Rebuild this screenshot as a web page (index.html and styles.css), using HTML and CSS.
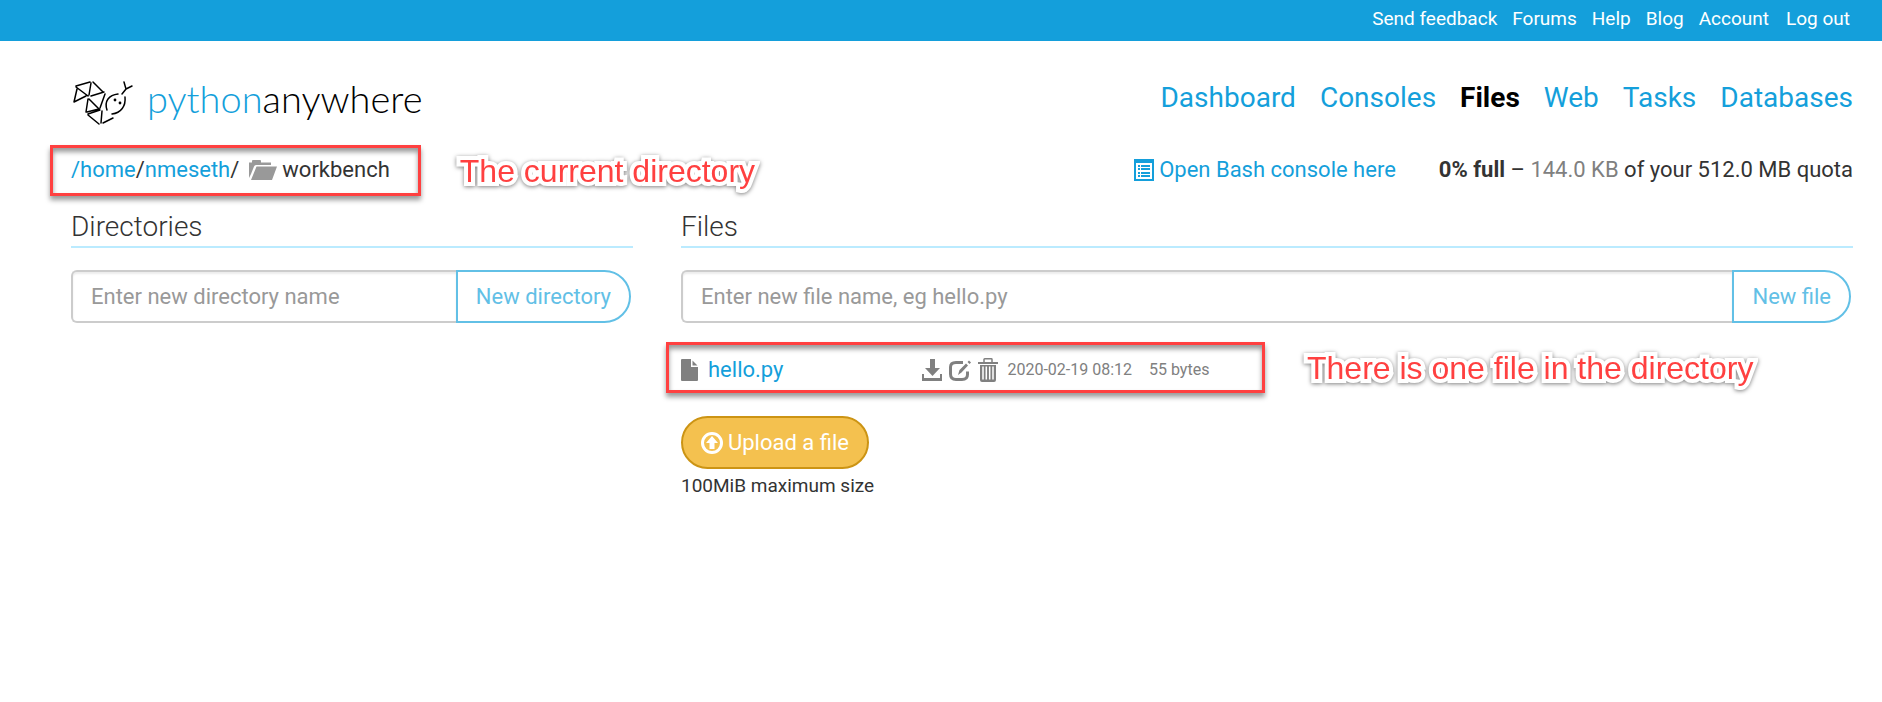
FILE: index.html
```html
<!DOCTYPE html>
<html lang="en">
<head>
<meta charset="utf-8">
<meta name="viewport" content="width=device-width, initial-scale=1">
<title>Files : workbench : PythonAnywhere</title>
<link rel="stylesheet" href="styles.css">
</head>
<body>
<nav class="topbar" aria-label="Account links">
  <a href="#">Send feedback</a>
  <a href="#">Forums</a>
  <a href="#">Help</a>
  <a href="#">Blog</a>
  <a href="#">Account</a>
  <button type="button" class="logout">Log out</button>
</nav>

<header class="masthead">
  <a class="brand" href="#">
    <svg class="snake" viewBox="-2 0 60 44" aria-hidden="true">
      <g fill="none" stroke="#000" stroke-width="1.5" stroke-linecap="round">
        <path d="M3 5 17 1M3 6 15 15M4 8 1 21M18 2 16 14M20 1 30 11M1 21 13 15M18 15 31 11M32 13 27 27M16 18 26 28M15 18 13 31M14 31 26 28M15 33 27 29M15 34 26 43M29 30 28 42M30 42 40 37"/>
        <path d="M45 13C36 14 31 20 34 29M52 16C53 25 48 32 39 33M49 13 53 8 51 1M53 8 59 5"/>
      </g>
      <circle cx="42" cy="19" r="1.4"/><circle cx="47" cy="22" r="1.4"/>
    </svg>
    <span class="wordmark"><span class="py">python</span>anywhere</span>
  </a>
  <nav class="mainnav" aria-label="Main">
    <a href="#">Dashboard</a>
    <a href="#">Consoles</a>
    <a href="#" class="active" aria-current="page">Files</a>
    <a href="#">Web</a>
    <a href="#">Tasks</a>
    <a href="#">Databases</a>
  </nav>
</header>

<main>
  <div class="pathbar">
    <div class="crumbs">
      <span><a href="#">/home</a>/<a href="#">nmeseth</a>/</span>
      <span class="current">
        <svg class="folder" viewBox="0 0 28 20" aria-hidden="true"><path fill="#999" d="M0 18V2.500h3V1q0-1 1-1h7q1 0 1 1v1.500h10V5H7Q5.500 5 5 6.500L2 14ZM7.500 6.500H28L23 20H2Z"/></svg>
        workbench
      </span>
      <span class="frame" aria-hidden="true"></span>
      <span class="note">The current directory</span>
    </div>
    <div class="usage">
      <a class="bash" href="#">
        <svg class="list" viewBox="0 0 20 22" aria-hidden="true"><path fill="#149fdb" fill-rule="evenodd" d="M0 0h20v22H0ZM2 4v16h16V4Z"/><path fill="#149fdb" d="M4 6h2v2H4ZM7 6h9v2H7ZM4 9h2v2H4ZM7 9h9v2H7ZM4 13h2v2H4ZM7 13h9v2H7ZM4 16h2v2H4ZM7 16h9v2H7Z"/></svg>
        Open Bash console here</a>
      <span><b>0% full</b> – <span class="muted">144.0 KB</span> of your 512.0 MB quota</span>
    </div>
  </div>

  <div class="columns">
    <section>
      <h2>Directories</h2>
      <form class="creator">
        <input type="text" aria-label="New directory name" placeholder="Enter new directory name">
        <button type="button">New directory</button>
      </form>
    </section>
    <section>
      <h2>Files</h2>
      <form class="creator">
        <input type="text" aria-label="New file name" placeholder="Enter new file name, eg hello.py">
        <button type="button">New file</button>
      </form>
      <div class="filerow">
        <span class="name">
          <svg class="doc" viewBox="0 0 17 22" aria-hidden="true"><path fill="#808080" d="M1 0h9v8h7v13q0 1-1 1H1q-1 0-1-1V1Q0 0 1 0ZM11.500 1.500 16.500 6.500h-5Z"/></svg>
          <a href="#">hello.py</a>
        </span>
        <span class="actions">
          <button type="button" aria-label="Download"><svg viewBox="0 0 20 24"><path fill="#808080" d="M8 1h5v9h5l-7.500 8L3 10h5ZM0 16h2v4h16v-4h2v7H0Z"/></svg></button>
          <button type="button" class="edit" aria-label="Edit"><svg viewBox="0 0 22 24"><path fill="none" stroke="#808080" stroke-width="3" d="M14 4.500H7Q1.500 4.500 1.500 9v7q0 5.500 5.500 5.500h6q5.500 0 5.500-5v-3"/><path fill="#808080" d="m9 17 1.500-5L17 5.500l2 2-6.500 7ZM18.500 4l1.500-1.500 2 2L20.500 6Z"/></svg></button>
          <button type="button" aria-label="Delete"><svg viewBox="0 0 20 24"><path fill="none" stroke="#808080" stroke-width="1.500" d="M6 4.500V1.500q0-.7.7-.7h6.600q.7 0 .7.700v3"/><path fill="#808080" d="M0 4h20v2H0ZM2 7h16v15q0 2-2 2H4q-2 0-2-2Z"/><path stroke="#fff" stroke-width="1.500" d="M5 8.500v13M8.300 8.500v13M11.700 8.500v13M15 8.500v13"/></svg></button>
        </span>
        <span class="date">2020-02-19 08:12</span>
        <span class="size">55 bytes</span>
        <span class="frame" aria-hidden="true"></span>
        <span class="note">There is one file in the directory</span>
      </div>
      <button type="button" class="upload">
        <svg viewBox="0 0 22 22" aria-hidden="true"><circle cx="11" cy="11" r="9.500" fill="none" stroke="#fff" stroke-width="3"/><path fill="#fff" d="m11 4 6 7h-3.500v6h-5v-6H5Z"/></svg>
        Upload a file
      </button>
      <p class="hint">100MiB maximum size</p>
    </section>
  </div>
</main>
</body>
</html>
```

FILE: styles.css
```css
* { box-sizing: border-box; }

body {
  margin: 0;
  background: #fff;
  color: #333;
  font: 22px/32px Roboto, "Liberation Sans", sans-serif;
}

a { color: #149fdb; text-decoration: none; }
button, input { font: inherit; }
button { cursor: pointer; }
svg { display: block; flex: none; }

.topbar {
  display: flex;
  justify-content: flex-end;
  align-items: center;
  gap: 15px;
  height: 41px;
  padding: 0 32px 4px 0;
  background: #149fdb;
  font-size: 19px;
  line-height: 24px;
}
.topbar a, .logout { color: #fff; }
.logout {
  margin-left: 2px;
  padding: 0;
  border: 0;
  background: none;
}

.masthead, .pathbar {
  display: flex;
  justify-content: space-between;
  padding: 0 29px 0 71px;
}
.masthead { align-items: flex-start; padding-top: 40px; }

.brand {
  display: flex;
  align-items: flex-start;
  gap: 16px;
  color: #000;
}
.snake { width: 60px; height: 44px; overflow: visible; }
.wordmark {
  font: 300 38px/34px Lato, sans-serif;
}
.py { color: #149fdb; }

.mainnav { display: flex; gap: 24px; font-size: 28px; line-height: 34px; }
.mainnav .active { color: #000; font-weight: 700; }

.pathbar { align-items: center; padding-top: 29px; }
.crumbs { position: relative; display: flex; gap: 10px; }
.current, .bash { display: flex; align-items: center; gap: 5px; }
.folder { width: 28px; height: 20px; }
.list { width: 20px; height: 22px; }
.usage { display: flex; gap: 43px; }
.muted { color: #808080; }

.frame {
  position: absolute;
  inset: -9px -31px -10px -21px;
  border: 3px solid #ff4040;
  box-shadow: 0 4px 5px rgb(0 0 0 / 40%), inset 0 4px 5px rgb(0 0 0 / 40%);
  pointer-events: none;
}
.note {
  position: absolute;
  top: -1px;
  left: 100%;
  margin-left: 70px;
  color: #ff4040;
  font: 32px/36px "Liberation Sans", Arial, sans-serif;
  white-space: nowrap;
  paint-order: stroke fill;
  -webkit-text-stroke: 8px #fff;
  stroke-linejoin: round;
  filter: drop-shadow(0 1px 2px rgb(0 0 0 / 50%));
}

.columns {
  display: grid;
  grid-template-columns: 1fr 2fr;
  margin: 22px 5px 0 47px;
}
section { padding: 0 24px; min-width: 0; }

h2 {
  margin: 0 0 22px;
  border-bottom: 2px solid #bbebff;
  font-size: 28px;
  line-height: 38px;
  font-weight: 300;
}

.creator { display: flex; padding-right: 2px; }
.creator input {
  flex: 1;
  min-width: 0;
  height: 53px;
  padding: 0 18px;
  border: 2px solid #ccc;
  border-right: 0;
  border-radius: 6px 0 0 6px;
  box-shadow: inset 0 2px 2px rgb(0 0 0 / 8%);
}
.creator input::placeholder { color: #999; opacity: 1; }
.creator button {
  padding: 0 18px;
  border: 2px solid #62c0e6;
  border-radius: 0 27px 27px 0;
  background: #fff;
  color: #62c0e6;
}

.filerow {
  position: relative;
  display: flex;
  align-items: center;
  width: 552px;
  max-width: 100%;
  margin-top: 31px;
  color: #808080;
  font-size: 16px;
}
.filerow .frame { inset: -12px -32px -7px -15px; }
.filerow .note { top: -4px; margin-left: 74px; }
.name { display: flex; align-items: center; gap: 10px; font-size: 22px; }
.doc { width: 17px; height: 22px; }
.actions { display: flex; gap: 7px; margin-left: auto; }
.actions button { padding: 0; border: 0; background: none; }
.actions svg { width: 20px; height: 24px; }
.actions .edit svg { width: 22px; }
.date { margin-left: 9px; }
.size { width: 101px; padding-left: 17px; white-space: nowrap; }

.upload {
  display: flex;
  align-items: center;
  gap: 5px;
  height: 53px;
  margin-top: 30px;
  padding: 0 18px;
  border: 2px solid #cc9414;
  border-radius: 27px;
  background: #f4c14f;
  color: #fff;
}
.upload svg { width: 22px; height: 22px; }
.hint { margin: 5px 0 0; font-size: 19px; line-height: 24px; }
```
